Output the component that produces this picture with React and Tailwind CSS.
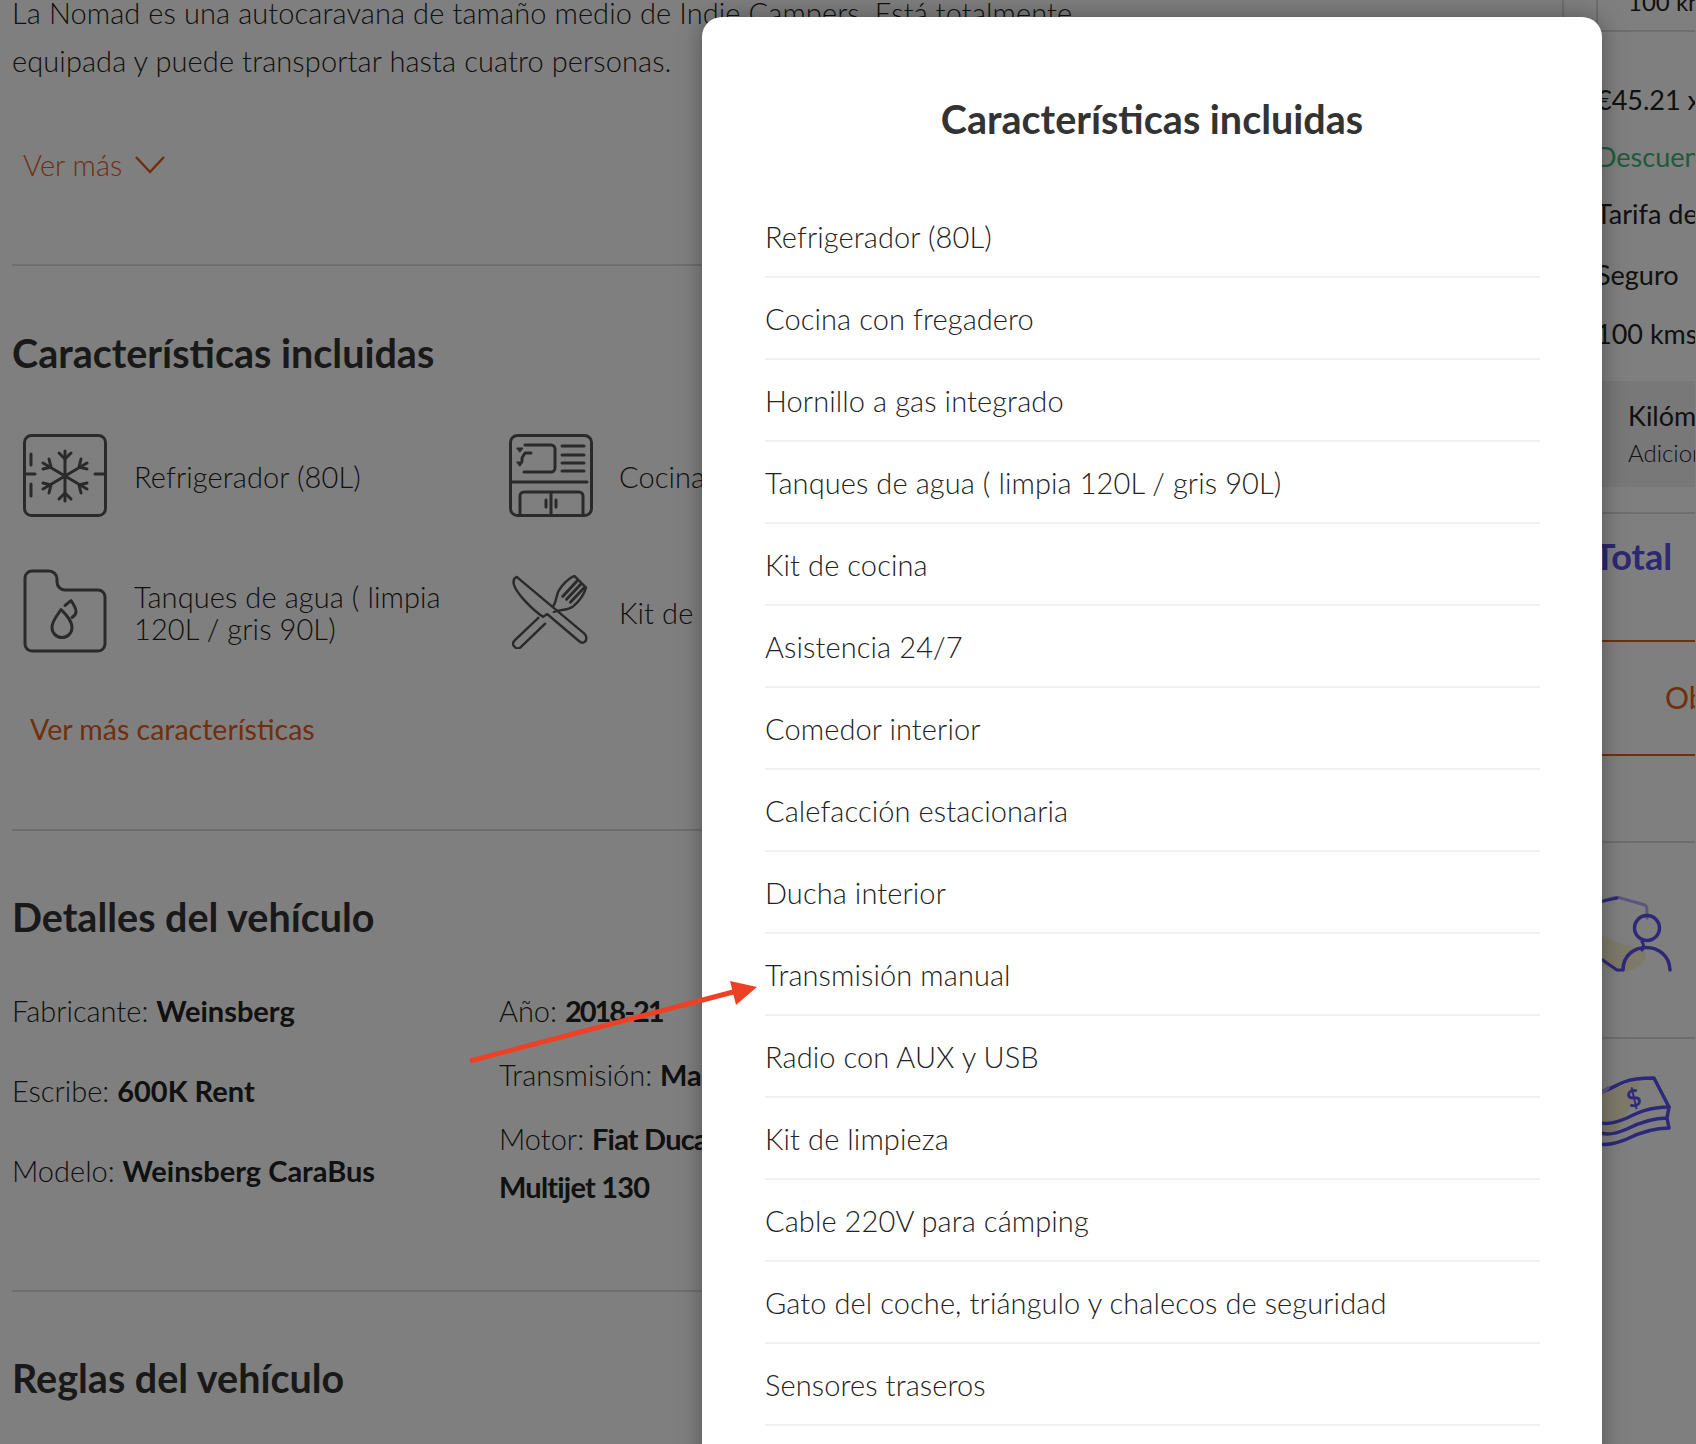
import React from 'react';

const features = [
  'Refrigerador (80L)',
  'Cocina con fregadero',
  'Hornillo a gas integrado',
  'Tanques de agua ( limpia 120L / gris 90L)',
  'Kit de cocina',
  'Asistencia 24/7',
  'Comedor interior',
  'Calefacción estacionaria',
  'Ducha interior',
  'Transmisión manual',
  'Radio con AUX y USB',
  'Kit de limpieza',
  'Cable 220V para cámping',
  'Gato del coche, triángulo y chalecos de seguridad',
  'Sensores traseros',
];

const FridgeIcon = () => (
  <svg width="84" height="83" viewBox="0 0 84 83" fill="none" stroke="#555" strokeWidth="3" strokeLinecap="round" strokeLinejoin="round">
    <rect x="1.5" y="1.5" width="81" height="80" rx="7" />
    <path d="M2 40h10M72 40h10M8 20v11M8 50v12" />
    <path d="M42 17v50M20 29l44 26M20 55l44-26" />
    <path d="M36 19l6 6 6-6M36 65l6-6 6 6" />
    <path d="M20 35l8 -2 -2-8M64 35l-8-2 2-8M20 49l8 2-2 8M64 49l-8 2 2 8" />
  </svg>
);

const KitchenIcon = () => (
  <svg width="86" height="83" viewBox="0 0 84 83" fill="none" stroke="#555" strokeWidth="3" strokeLinecap="round" strokeLinejoin="round">
    <rect x="1.5" y="1.5" width="81" height="80" rx="7" />
    <path d="M3 48h75" />
    <path d="M16 11h26a4 4 0 0 1 4 4v19a4 4 0 0 1-4 4H15" />
    <path d="M53 12h22M53 21h22M53 29h22M53 37h22" />
    <path d="M13 24l3-5h6M13 24v3" />
    <path d="M8 14h6l-3 4zM8 28h6l-3 4z" fill="#555" strokeWidth="1" />
    <path d="M11 81V62a4 4 0 0 1 4-4h55a4 4 0 0 1 4 4v19M42 58v23M37 66v7M47 66v7" />
  </svg>
);

const TankIcon = () => (
  <svg width="84" height="84" viewBox="0 0 84 83" fill="none" stroke="#555" strokeWidth="3" strokeLinecap="round" strokeLinejoin="round">
    <path d="M9 1.5h17a8 8 0 0 1 8 8v3a8 8 0 0 0 8 8h33a7 7 0 0 1 7 7v47a7 7 0 0 1-7 7H9a7 7 0 0 1-7-7V8.5a7 7 0 0 1 7-7z" />
    <path d="M38 40c-3 5-9 11-9 18a10 10 0 0 0 20 0c0-7-6-13-11-18z" />
    <path d="M42 36c1-1 4-3 6-5 2 3 5 8 5 11s-1 4-4 6" />
  </svg>
);

const CutleryIcon = () => (
  <svg className="ml-[4px] mt-[2px]" width="76" height="74" viewBox="0 0 78 76" fill="none" stroke="#555" strokeWidth="2.5" strokeLinecap="round" strokeLinejoin="round">
    <path d="M5 2c-3 1-4 4-3 8 2 8 18 25 30 33l4-3 33 28c3 3 7 1 7-2 1-2 0-4-2-6L6 3z" />
    <path d="M27 44L3 67c-2 2-3 4-1 6 2 3 5 3 7 1l25-24" />
    <path d="M42 32c3-2 3-10 6-16 3-5 10-13 16-15l12 12c-2 7-7 14-13 19-7 5-13 3-20 6" />
    <path d="M52 22L67 6M56 25L71 9M60 28L74 13" strokeWidth="3" />
  </svg>
);

const ShieldPerson = () => (
  <svg className="-ml-[10px]" width="94" height="84" viewBox="0 0 94 84" fill="none" strokeLinecap="round" strokeLinejoin="round">
    <path d="M0 28c20 18 40 22 55 24 8 8-2 22-18 24C15 78-2 60 0 28z" fill="#fdf4d4" stroke="none" />
    <path d="M17 4L29 1l28 8c2 1 2 3 2 13" stroke="#bcaaff" strokeWidth="3" />
    <path d="M2 8L29 2M54 46c2 2 2 6 0 8" stroke="#5a50f0" strokeWidth="3" />
    <path d="M3 56l26 18h4" stroke="#5a50f0" strokeWidth="3" />
    <circle cx="59" cy="32" r="12.5" stroke="#5a50f0" strokeWidth="3.5" />
    <path d="M35 74c0-30 46-30 47 0" stroke="#5a50f0" strokeWidth="3.5" />
  </svg>
);

const MoneyIcon = () => (
  <svg className="-ml-[10px]" width="94" height="80" viewBox="0 0 94 80" fill="none" strokeLinecap="round" strokeLinejoin="round">
    <path d="M8 22c18-10 30-14 44-18-2 16-16 40-28 58C12 60 8 40 8 22z" fill="#fdf4d4" stroke="none" />
    <path d="M0 18c14 0 22-6 36-12 10-4 20-4 30-4l15 29c-20 0-32 6-42 11-12 5-22 7-28 4L0 20" stroke="#5a50f0" strokeWidth="3.5" />
    <path d="M0 18c14 0 16-2 20-6" stroke="#bcaaff" strokeWidth="3.5" />
    <path d="M81 31l-2 11c-16 0-30 6-40 11-12 5-22 7-28 3M79 42l2 10c-18 0-32 6-42 11-12 5-24 7-30 4" stroke="#5a50f0" strokeWidth="3.5" />
    <text x="40" y="31" fontSize="24" fontWeight="700" fill="#5a50f0" stroke="none" fontFamily="Lato, sans-serif" transform="rotate(-18 46 26)">$</text>
  </svg>
);

const Feature = ({ icon, children }) => (
  <div className="flex items-center gap-[25px] h-[84px]">
    <div className="w-[86px] shrink-0">{icon}</div>
    <span className="text-[29px] leading-[32px] font-light w-[330px] pt-[3px] tracking-[0.1px]">{children}</span>
  </div>
);

const Detail = ({ label, value, className, valueClass }) => (
  <p className={className}>
    <span className="font-light">{label}: </span>
    <b className={`font-bold ${valueClass || ''}`}>{value}</b>
  </p>
);

const App = () => {
  return (
    <div className="relative h-[1444px] w-full overflow-hidden bg-white text-[#222] font-['Lato',sans-serif]">
      <div className="flex h-full">
        {/* left column */}
        <main className="w-[1564px] shrink-0 border-r-2 border-[#dcdcdc] pl-3 pr-10">
          <p className="-mt-[11px] text-[29px] leading-[48px] font-light w-[1100px] tracking-[0.1px]">
            La Nomad es una autocaravana de tamaño medio de Indie Campers. Está totalmente equipada y puede transportar hasta cuatro personas.
          </p>
          <button className="mt-[60px] ml-[11px] flex h-[40px] items-center gap-[13px] text-[29px] text-[#e0601c] font-light">
            Ver más
            <svg width="30" height="18" viewBox="0 0 30 18" fill="none" stroke="#e0601c" strokeWidth="2.5"><path d="M1 1l14 15L29 1" /></svg>
          </button>

          <hr className="mt-[79px] border-t-2 border-[#dcdcdc]" />

          <h2 className="mt-[62px] h-[50px] text-[39.5px] leading-[50px] font-bold text-[#333]">Características incluidas</h2>
          <div className="mt-[55px] ml-[11px] grid grid-cols-[485px_485px] gap-y-[52px]">
            <Feature icon={<FridgeIcon />}>Refrigerador (80L)</Feature>
            <Feature icon={<KitchenIcon />}>Cocina con fregadero</Feature>
            <Feature icon={<TankIcon />}>Tanques de agua ( limpia 120L / gris 90L)</Feature>
            <Feature icon={<CutleryIcon />}>Kit de cocina</Feature>
          </div>
          <button className="mt-[56px] ml-[18px] block h-[40px] text-[28.5px] leading-[40px] text-[#e0601c]">Ver más características</button>

          <hr className="mt-[80px] border-t-2 border-[#dcdcdc]" />

          <h2 className="mt-[61px] h-[50px] text-[39.5px] leading-[50px] font-bold text-[#333]">Detalles del vehículo</h2>
          <div className="mt-[45px] grid grid-cols-[487px_420px] text-[29px] leading-[48px]">
            <div className="flex flex-col gap-[32px]">
              <Detail label="Fabricante" value="Weinsberg" />
              <Detail label="Escribe" value="600K Rent" />
              <Detail label="Modelo" value="Weinsberg CaraBus" />
            </div>
            <div className="flex flex-col gap-[16px]">
              <Detail label="Año" value="2018-21" valueClass="tracking-[-2px]" />
              <Detail label="Transmisión" value="Manual" />
              <Detail label="Motor" value="Fiat Ducato 2.3 Multijet 130" className="w-[330px]" valueClass="tracking-[-0.8px]" />
            </div>
          </div>

          <hr className="mt-[79px] border-t-2 border-[#dcdcdc]" />

          <h2 className="mt-[61px] h-[50px] text-[39.5px] leading-[50px] font-bold text-[#333]">Reglas del vehículo</h2>
        </main>

        {/* price card, almost all of it is behind the dialog */}
        <aside className="ml-[32px] w-[99px] shrink-0 overflow-hidden whitespace-nowrap border-l-2 border-[#dcdcdc] text-[27px]">
          <div className="h-[32px] border-b-2 border-[#dcdcdc] pl-[30px] text-[24px] leading-[4px]">100 km</div>
          <div className="-ml-[2px]">
            <div className="mt-[48px] h-[40px] leading-[40px]">€45.21 x 7</div>
            <div className="mt-[17px] h-[40px] leading-[40px] text-[#40b478]">Descuento</div>
            <div className="mt-[17px] h-[40px] leading-[40px]">Tarifa de</div>
            <div className="mt-[21px] h-[40px] leading-[40px]">Seguro</div>
            <div className="mt-[19px] h-[40px] leading-[40px]">100 kms</div>
          </div>
          <div className="mt-[27px] h-[106px] bg-[#f0f0f0] pl-[30px] pt-[16px]">
            <div className="leading-[38px]">Kilómetros</div>
            <div className="text-[24px] leading-[36px] font-light">Adicionales</div>
          </div>
          <div className="mt-[25px] -ml-[4px] border-t-2 border-[#dcdcdc] pt-[20px] text-[36px] leading-[44px] font-bold text-[#5a50e4]">Total</div>
          <div className="mt-[62px] h-[116px] border-y-2 border-[#e0601c] pl-[67px] text-[30px] leading-[110px] text-[#e0601c]">Obtener</div>
          <div className="mt-[85px] border-t-2 border-[#dcdcdc] pt-[53px]"><ShieldPerson /></div>
          <div className="mt-[57px] border-t-2 border-[#dcdcdc] pt-[37px]"><MoneyIcon /></div>
        </aside>
      </div>

      {/* dialog */}
      <div className="absolute inset-0 flex items-start justify-end bg-black/50 pr-[94px] pt-[17px]">
        <div className="h-[1500px] w-[900px] rounded-[20px] bg-white px-[63px] pt-[77px] shadow-[0_0_24px_rgba(0,0,0,0.35)]">
          <h2 className="h-[50px] text-center text-[39.5px] leading-[50px] font-bold text-[#333]">Características incluidas</h2>
          <ul className="mt-[52px] w-[775px]">
            {features.map(name => (
              <li key={name} className="flex h-[82px] items-center border-b-2 border-[#f1f1f1] pt-[1px] text-[29px] tracking-[0.1px] font-light text-[#222]">
                {name}
              </li>
            ))}
          </ul>
        </div>
      </div>

      {/* annotation arrow */}
      <svg className="absolute left-[460px] top-[970px]" width="310" height="100" viewBox="0 0 310 100" fill="none">
        <path d="M10 91L277 21" stroke="#ee4025" strokeWidth="5" />
        <path d="M297 17L270 11L276 35z" fill="#ee4025" />
      </svg>
    </div>
  );
};

export default App;
